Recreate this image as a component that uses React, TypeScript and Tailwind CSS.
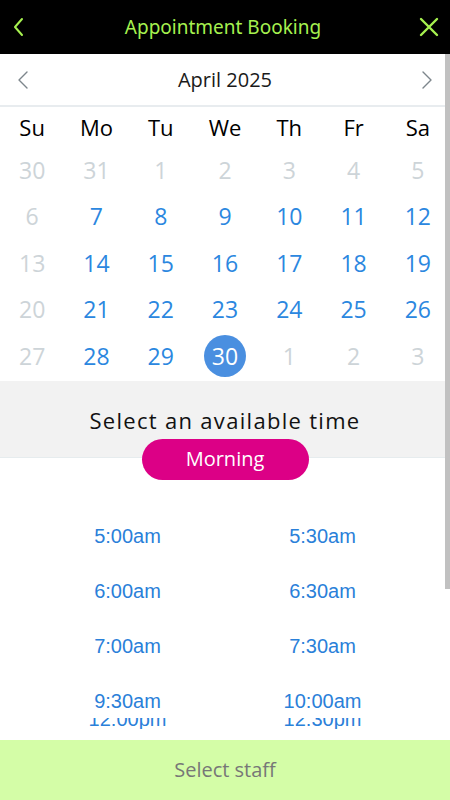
import React from "react";

const weekdays = ["Su", "Mo", "Tu", "We", "Th", "Fr", "Sa"];
type Day = { n: number; muted?: boolean; selected?: boolean };
const weeks: Day[][] = [
  [{ n: 30, muted: true }, { n: 31, muted: true }, { n: 1, muted: true }, { n: 2, muted: true }, { n: 3, muted: true }, { n: 4, muted: true }, { n: 5, muted: true }],
  [{ n: 6, muted: true }, { n: 7 }, { n: 8 }, { n: 9 }, { n: 10 }, { n: 11 }, { n: 12 }],
  [{ n: 13, muted: true }, { n: 14 }, { n: 15 }, { n: 16 }, { n: 17 }, { n: 18 }, { n: 19 }],
  [{ n: 20, muted: true }, { n: 21 }, { n: 22 }, { n: 23 }, { n: 24 }, { n: 25 }, { n: 26 }],
  [{ n: 27, muted: true }, { n: 28 }, { n: 29 }, { n: 30, selected: true }, { n: 1, muted: true }, { n: 2, muted: true }, { n: 3, muted: true }],
];
const times = [
  ["5:00am", "5:30am"],
  ["6:00am", "6:30am"],
  ["7:00am", "7:30am"],
  ["9:30am", "10:00am"],
];

export default function App() {
  return (
    <div className="relative w-[450px] h-[800px] flex flex-col bg-white overflow-hidden" style={{ fontFamily: '"Open Sans", "Noto Sans", sans-serif' }}>
      {/* Header */}
      <div className="h-[54px] bg-black flex items-center justify-between px-[10px] shrink-0">
        <svg width="18" height="20" viewBox="0 0 18 20" fill="none" stroke="#a6f14f" strokeWidth="2" strokeLinecap="round" strokeLinejoin="round">
          <path d="M12 2 L5 10 L12 18" />
        </svg>
        <div className="text-[19px] text-[#a6f14f]" style={{ fontFamily: '"Noto Sans", sans-serif' }}>Appointment Booking</div>
        <svg width="22" height="22" viewBox="0 0 22 22" fill="none" stroke="#a6f14f" strokeWidth="2.4" strokeLinecap="round">
          <path d="M3 3 L19 19 M19 3 L3 19" />
        </svg>
      </div>

      {/* Scrollable content */}
      <div className="flex-1 flex flex-col overflow-hidden">
        {/* Month nav */}
        <div className="h-[53px] flex items-center justify-between px-[16px] border-b-[2px] border-[#e8ecef] shrink-0">
          <svg width="14" height="20" viewBox="0 0 14 20" fill="none" stroke="#7d868c" strokeWidth="1.4" strokeLinecap="round" strokeLinejoin="round">
            <path d="M11 2 L3 10 L11 18" />
          </svg>
          <div className="text-[20px] text-[#1a1a1a]">April 2025</div>
          <svg width="14" height="20" viewBox="0 0 14 20" fill="none" stroke="#7d868c" strokeWidth="1.4" strokeLinecap="round" strokeLinejoin="round">
            <path d="M3 2 L11 10 L3 18" />
          </svg>
        </div>

        {/* Weekdays */}
        <div className="grid grid-cols-7 h-[40px] items-center shrink-0">
          {weekdays.map((w) => (
            <div key={w} className="text-center text-[22px] text-black leading-none">{w}</div>
          ))}
        </div>

        {/* Dates */}
        <div className="flex flex-col shrink-0">
          {weeks.map((wk, i) => (
            <div key={i} className="grid grid-cols-7 h-[46.5px] items-center">
              {wk.map((d, j) => (
                <div key={j} className="flex items-center justify-center">
                  {d.selected ? (
                    <div className="w-[42px] h-[42px] rounded-full bg-[#4a8fe0] text-white text-[23px] flex items-center justify-center">{d.n}</div>
                  ) : (
                    <div className={`text-[23px] leading-none ${d.muted ? "text-[#cdd4d8]" : "text-[#2b87df]"}`}>{d.n}</div>
                  )}
                </div>
              ))}
            </div>
          ))}
        </div>

        {/* Time section header */}
        <div className="h-[77px] bg-[#f2f2f2] border-b border-[#e6ecee] flex justify-center pt-[24px] shrink-0 mt-[1px]">
          <div className="text-[22px] text-[#111] tracking-[1.3px] leading-[30px]">Select an available time</div>
        </div>
        <div className="flex justify-center -mt-[19px] relative z-10 shrink-0">
          <div className="w-[167px] h-[41px] rounded-full bg-[#dc0086] text-white text-[20px] flex items-center justify-center">Morning</div>
        </div>

        {/* Times */}
        <div className="w-[390px] mx-auto pt-[29px] flex flex-col" style={{ fontFamily: '"Liberation Sans", Arial, sans-serif' }}>
          {times.map((row, i) => (
            <div key={i} className="grid grid-cols-2 h-[55px] items-center">
              {row.map((t) => (
                <div key={t} className="text-center text-[20px] text-[#2a80d9]">{t}</div>
              ))}
            </div>
          ))}
          <div className="grid grid-cols-2 h-[11px] -mt-[11px] overflow-hidden items-start">
            <div className="text-center text-[20px] text-[#2a80d9] leading-[20px] -mt-[9px]">12:00pm</div>
            <div className="text-center text-[20px] text-[#2a80d9] leading-[20px] -mt-[9px]">12:30pm</div>
          </div>
        </div>
      </div>

      {/* Bottom button */}
      <div className="h-[60px] bg-[#d4fda7] flex items-center justify-center shrink-0">
        <div className="text-[20px] text-[#777]">Select staff</div>
      </div>

      {/* Scrollbar thumb */}
      <div className="absolute left-[445px] top-[54px] w-[5px] h-[535px] bg-[#c1c1c1]" />
    </div>
  );
}
